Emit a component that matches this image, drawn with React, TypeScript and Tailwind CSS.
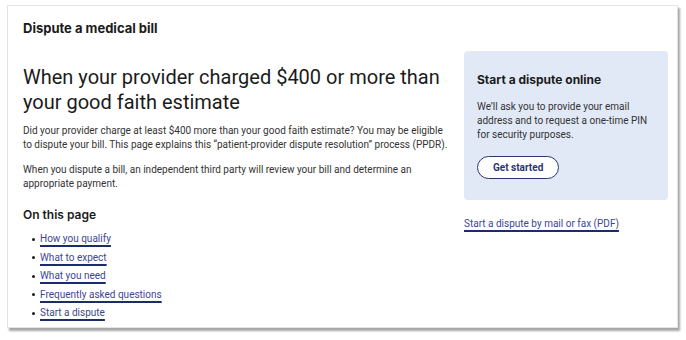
import React from 'react';

const links = [
  'How you qualify',
  'What to expect',
  'What you need',
  'Frequently asked questions',
  'Start a dispute',
];

const linkCls =
  'text-[#3a4796] underline decoration-[#1c2a6e] decoration-2 underline-offset-[3px]';

export default function App() {
  return (
    <div className="w-[686px] h-[340px] bg-white pl-[7px] pt-[5px] font-['Roboto',sans-serif] text-[#1b1b1b]">
      <div className="w-[671px] h-[323px] border border-[#e3e3e3] bg-white shadow-[2px_3px_2px_rgba(0,0,0,0.35)] pl-[15px] pr-[9px] pt-[13px]">
        <h1 className="font-['Inter',sans-serif] text-[13px] leading-[18px] font-bold">Dispute a medical bill</h1>

        <div className="flex gap-[7px] mt-[14px]">
          {/* Main column */}
          <div className="w-[434px] pt-[14px]">
            <h2 className="text-[20px] leading-[25px] font-normal">
              When your provider charged $400 or more than your good faith estimate
            </h2>
            <p className="mt-[9px] w-[425px] text-[10px] leading-[14px] text-[#333]">
              Did your provider charge at least $400 more than your good faith estimate? You may be eligible to
              dispute your bill. This page explains this “patient-provider dispute resolution” process (PPDR).
            </p>
            <p className="mt-[11px] text-[10px] leading-[14px] text-[#333] w-[400px]">
              When you dispute a bill, an independent third party will review your bill and determine an
              appropriate payment.
            </p>
            <h3 className="mt-[16px] font-['Inter',sans-serif] text-[12px] leading-[16px] font-semibold">
              On this page
            </h3>
            <ul className="mt-[7px] pl-[9px] text-[10px] leading-[18.5px]">
              {links.map((l) => (
                <li key={l} className="flex items-center gap-[5px]">
                  <span className="w-[3px] h-[3px] rounded-full bg-[#1b1b1b]" />
                  <a href="#" className={linkCls}>
                    {l}
                  </a>
                </li>
              ))}
            </ul>
          </div>

          {/* Side column */}
          <div className="w-[204px]">
            <div className="bg-[#e1e9f6] rounded-[4px] h-[149px] px-[13px] pt-[21px]">
              <h4 className="font-['Inter',sans-serif] text-[12px] leading-[16px] font-bold">
                Start a dispute online
              </h4>
              <p className="mt-[12px] text-[10px] leading-[14px] text-[#333]">
                We’ll ask you to provide your email address and to request a one-time PIN for security purposes.
              </p>
              <button className="mt-[14px] h-[23px] px-[15px] rounded-full border-[1.5px] border-[#2b3575] bg-white text-[10px] font-bold text-[#2b3575]">
                Get started
              </button>
            </div>
            <a href="#" className={`block mt-[17px] text-[10px] leading-[14px] ${linkCls}`}>
              Start a dispute by mail or fax (PDF)
            </a>
          </div>
        </div>
      </div>
    </div>
  );
}
